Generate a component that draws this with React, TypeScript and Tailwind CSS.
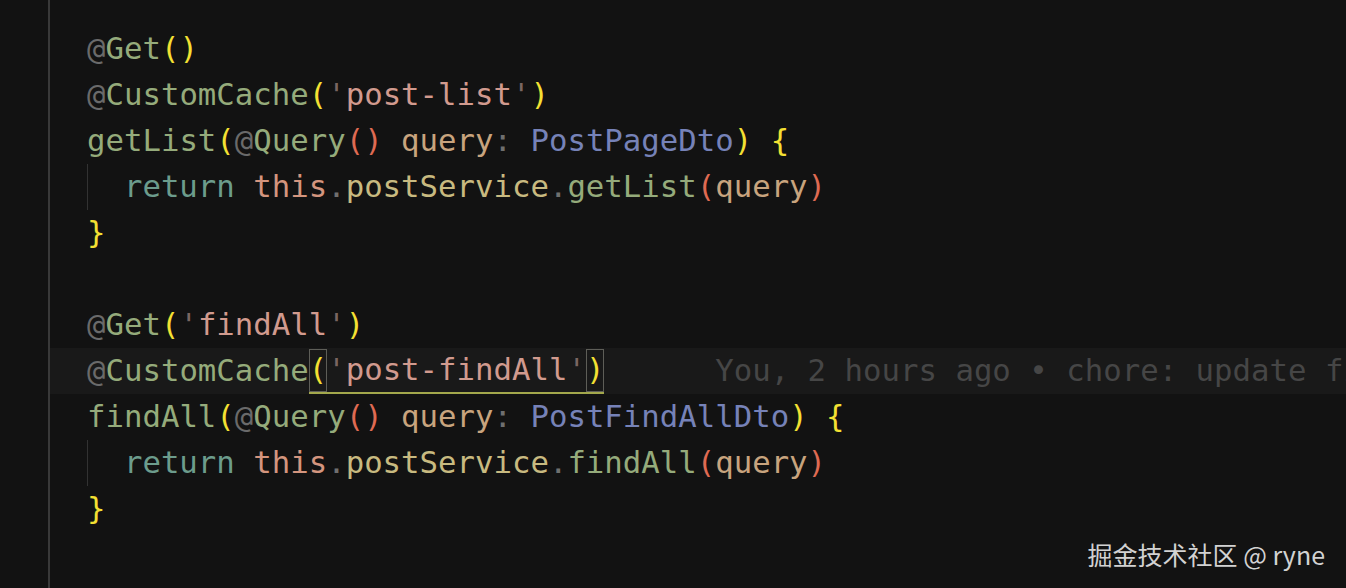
import type { ReactNode } from "react";

type Tok = [string, string];

const C = {
  at: "text-[#6a6a6a]",
  deco: "text-[#95ab7b]",
  fn: "text-[#95ab7b]",
  y: "text-[#f4e033]",
  red: "text-[#df6a52]",
  str: "text-[#d19a8e]",
  quote: "text-[#7a6662]",
  param: "text-[#c8a47e]",
  punct: "text-[#6f6f6f]",
  type: "text-[#7682b8]",
  kw: "text-[#6c9c8c]",
  self: "text-[#d4957e]",
  prop: "text-[#c8ba80]",
};

const lines: (Tok[] | null)[] = [
  [["@", C.at], ["Get", C.deco], ["()", C.y]],
  [["@", C.at], ["CustomCache", C.deco], ["(", C.y], ["'", C.quote], ["post-list", C.str], ["'", C.quote], [")", C.y]],
  [["getList", C.fn], ["(", C.y], ["@", C.at], ["Query", C.deco], ["()", C.red], [" query", C.param], [":", C.punct], [" PostPageDto", C.type], [")", C.y], [" {", C.y]],
  [["return", C.kw], [" this", C.self], [".", C.punct], ["postService", C.prop], [".", C.punct], ["getList", C.fn], ["(", C.red], ["query", C.param], [")", C.red]],
  [["}", C.y]],
  null,
  [["@", C.at], ["Get", C.deco], ["(", C.y], ["'", C.quote], ["findAll", C.str], ["'", C.quote], [")", C.y]],
  [],
  [["findAll", C.fn], ["(", C.y], ["@", C.at], ["Query", C.deco], ["()", C.red], [" query", C.param], [":", C.punct], [" PostFindAllDto", C.type], [")", C.y], [" {", C.y]],
  [["return", C.kw], [" this", C.self], [".", C.punct], ["postService", C.prop], [".", C.punct], ["findAll", C.fn], ["(", C.red], ["query", C.param], [")", C.red]],
  [["}", C.y]],
  null,
  [["@", C.at], ["Get", C.deco], ["(", C.y], ["'", C.quote], [":id", C.str], ["'", C.quote], [")", C.y]],
];

const indented = new Set([3, 9]);

function Toks({ toks }: { toks: Tok[] }) {
  return (
    <>
      {toks.map(([t, c], i) => (
        <span key={i} className={c}>
          {t}
        </span>
      ))}
    </>
  );
}

function Line({ children, active }: { children?: ReactNode; active?: boolean }) {
  return (
    <div
      className={
        "flex h-[46px] shrink-0 items-center whitespace-pre pl-[37px] " +
        (active ? "bg-[#191919]" : "")
      }
    >
      {children}
    </div>
  );
}

function ActiveLine() {
  return (
    <Line active>
      <span className={C.at}>@</span>
      <span className={C.deco}>CustomCache</span>
      <span className="flex h-[45px] items-center self-end border-b-2 border-[#a3a84c]">
        <span className={"flex h-full items-center outline outline-1 -outline-offset-1 outline-[#5e5e58] " + C.y}>(</span>
        <span className={C.quote}>'</span>
        <span className={C.str}>post-findAll</span>
        <span className={C.quote}>'</span>
        <span className={"flex h-full items-center outline outline-1 -outline-offset-1 outline-[#5e5e58] " + C.y}>)</span>
      </span>
      <span className="text-[#464646]">{"      You, 2 hours ago • chore: update findAll cache key"}</span>
    </Line>
  );
}

export default function App() {
  return (
    <div
      className="relative flex h-[588px] w-[1346px] overflow-hidden bg-[#121212] text-[30.7px]"
      style={{ fontFamily: '"DejaVu Sans Mono", "Liberation Mono", monospace' }}
    >
      <div className="w-[50px] shrink-0 border-r-2 border-[#393939]" />
      <div className="flex min-w-0 flex-1 flex-col pt-[26px]">
        {lines.map((l, i) => {
          if (i === 7) return <ActiveLine key={i} />;
          if (l === null) return <Line key={i} />;
          if (indented.has(i))
            return (
              <Line key={i}>
                <span className="w-[2ch] self-stretch shadow-[inset_1px_0_0_#323232]" />
                <Toks toks={l} />
              </Line>
            );
          return (
            <Line key={i}>
              <Toks toks={l} />
            </Line>
          );
        })}
      </div>
      <div
        className="absolute bottom-[21px] right-[21px] text-[25px] leading-none text-[#d2d2d2]"
        style={{ fontFamily: '"Noto Sans CJK SC", "Noto Sans", sans-serif' }}
      >
        掘金技术社区 @ ryne
      </div>
    </div>
  );
}
